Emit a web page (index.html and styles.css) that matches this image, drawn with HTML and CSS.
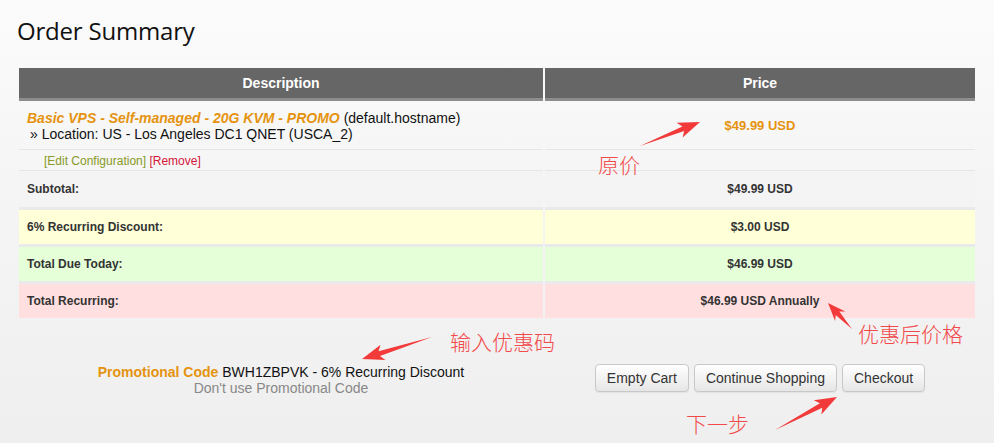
FILE: index.html
```html
<!DOCTYPE html>
<html lang="en">
<head>
<meta charset="utf-8">
<title>Order Summary</title>
<link rel="stylesheet" href="styles.css">
</head>
<body>
<div class="page">
  <h1 class="title">Order Summary</h1>
  <table class="cart">
    <colgroup><col class="c-desc"><col class="c-price"></colgroup>
    <thead>
      <tr><th>Description</th><th>Price</th></tr>
    </thead>
    <tbody>
      <tr class="product">
        <td><span class="pname">Basic VPS - Self-managed - 20G KVM - PROMO</span> (default.hostname)<br><span class="opt">» Location: US - Los Angeles DC1 QNET (USCA_2)</span></td>
        <td class="pprice">$49.99 USD</td>
      </tr>
      <tr class="actions">
        <td><a class="edit">[Edit Configuration]</a> <a class="remove">[Remove]</a></td>
        <td></td>
      </tr>
      <tr class="sum subtotal"><td>Subtotal:</td><td class="amt">$49.99 USD</td></tr>
      <tr class="sum discount"><td>6% Recurring Discount:</td><td class="amt">$3.00 USD</td></tr>
      <tr class="sum total"><td>Total Due Today:</td><td class="amt">$46.99 USD</td></tr>
      <tr class="sum recurring"><td>Total Recurring:</td><td class="amt">$46.99 USD Annually</td></tr>
    </tbody>
  </table>
  <div class="footer">
    <div class="promo">
      <div><span class="plabel">Promotional Code</span> BWH1ZBPVK - 6% Recurring Discount</div>
      <div><a class="nopromo">Don't use Promotional Code</a></div>
    </div>
    <div class="buttons">
      <button class="btn">Empty Cart</button>
      <button class="btn">Continue Shopping</button>
      <button class="btn">Checkout</button>
    </div>
  </div>
</div>
<div class="notes">
  <svg class="arrows" width="994" height="443" viewBox="0 0 994 443">
    <polygon points="640,146 684.2,131 682.6,137.6 700,122 676.6,122.8 682.4,126.4"/>
    <polygon points="432,337 380,356 385.4,360 362,359 380.6,344.8 378.5,351.2"/>
    <polygon points="852,329 839.3,311.6 845.3,311.5 828,303 835.1,320.9 835.7,315"/>
    <polygon points="775,430 822.3,407.7 821.4,414.4 837,397 813.8,400.2 819.9,403.3"/>
  </svg>
  <span class="note n1">原价</span>
  <span class="note n2">输入优惠码</span>
  <span class="note n3">优惠后价格</span>
  <span class="note n4">下一步</span>
</div>
</body>
</html>
```
FILE: styles.css
```css
html {
  background: linear-gradient(to bottom, #fbfbfb 0%, #f4f4f4 50%, #efefef 100%);
  min-height: 100%;
}
body {
  margin: 0;
  font-family: "Liberation Sans", Arial, sans-serif;
  color: #111;
  position: relative;
  height: 443px;
  overflow: hidden;
}
.title {
  margin: 0;
  padding: 14px 0 0 17px;
  font-family: "Open Sans", "Liberation Sans", sans-serif;
  font-weight: 400;
  font-size: 24px;
  line-height: 33px;
  color: #111;
  letter-spacing: -0.2px;
}
.cart {
  margin: 21px 0 0 17px;
  width: 960px;
  table-layout: fixed;
  border-collapse: separate;
  border-spacing: 2px 0;
  font-size: 14px;
}
.c-desc { width: 524px; }
.c-price { width: 430px; }
.cart th {
  background: #666;
  color: #fff;
  font-weight: bold;
  font-size: 14px;
  line-height: 30px;
  padding: 0;
  border-bottom: 3px solid #8c8c8c;
  text-align: center;
}
.cart td {
  padding: 0 8px;
}
.product td {
  padding: 9px 8px 7px;
  line-height: 16px;
  border-bottom: 1px solid #e6e6e6;
  vertical-align: top;
}
.pname {
  color: #e5930f;
  font-weight: bold;
  font-style: italic;
}
.opt { padding-left: 3px; }
.product .pprice {
  text-align: center;
  color: #e5930f;
  font-weight: bold;
  font-size: 13px;
  padding-top: 17px;
}
.actions td {
  padding: 3px 0 1px 25px;
  line-height: 16px;
  font-size: 12px;
  border-bottom: 1px solid #e6e6e6;
}
.edit { color: #879a26; }
.remove { color: #d3163a; }
.sum td {
  font-size: 12px;
  font-weight: bold;
  color: #333;
  line-height: 34px;
  padding: 0 8px;
}
.sum .amt { text-align: center; }
.subtotal td { background: #f4f4f4; line-height: 36px; }
.discount td { background: #ffffd8; border-top: 3px solid #eaeaea; }
.total td { background: #e5ffd9; border-top: 3px solid #eaeaea; }
.recurring td { background: #ffdfe0; border-top: 3px solid #eaeaea; }
.footer {
  display: flex;
  gap: 2px;
  margin: 46px 0 0 19px;
}
.promo {
  width: 524px;
  text-align: center;
  font-size: 14px;
  line-height: 16px;
  color: #111;
}
.plabel { color: #e5930f; font-weight: bold; }
.nopromo { color: #888; }
.buttons {
  width: 430px;
  display: flex;
  justify-content: center;
  gap: 5px;
}
.btn {
  height: 28px;
  padding: 0 11px;
  font-family: "Liberation Sans", Arial, sans-serif;
  font-size: 14px;
  color: #333;
  background: linear-gradient(to bottom, #ffffff 0%, #e6e6e6 100%);
  border: 1px solid #c8c8c8;
  border-radius: 4px;
  box-shadow: 0 1px 1px rgba(0,0,0,0.06);
}
.notes {
  position: absolute;
  left: 0;
  top: 0;
  width: 994px;
  height: 443px;
  pointer-events: none;
}
.arrows { position: absolute; left: 0; top: 0; }
.arrows polygon { fill: #f23a3a; }
.note {
  position: absolute;
  font-family: "Noto Sans CJK SC", sans-serif;
  font-size: 21px;
  line-height: 21px;
  color: #f24a4a;
  font-weight: 300;
  white-space: nowrap;
}
.n1 { left: 598px; top: 154px; }
.n2 { left: 450px; top: 331px; }
.n3 { left: 858px; top: 323px; }
.n4 { left: 686px; top: 413px; }
```
